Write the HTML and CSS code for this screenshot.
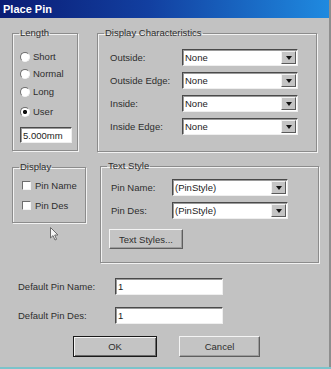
FILE: index.html
```html
<!DOCTYPE html>
<html lang="en">

<head>
    <meta charset="UTF-8">
    <meta name="viewport" content="width=device-width, initial-scale=1.0">
    <title>Place Pin</title>
    <link rel="stylesheet" href="styles.css">
</head>

<body>
    <div class="dialog">
        <div class="titlebar">Place Pin</div>

        <div class="content">
            <div class="row row-top">
                <fieldset class="group group-length">
                    <legend>Length</legend>
                    <div class="option"><span class="radio"></span>Short</div>
                    <div class="option"><span class="radio"></span>Normal</div>
                    <div class="option option-long"><span class="radio"></span>Long</div>
                    <div class="option option-user"><span class="radio checked"></span>User</div>
                    <div class="textbox textbox-length">5.000mm</div>
                </fieldset>

                <fieldset class="group group-chars">
                    <legend>Display Characteristics</legend>
                    <div class="combo-row">
                        <span class="label label-chars">Outside:</span>
                        <div class="combo"><span class="combo-text">None</span><span class="combo-btn"></span></div>
                    </div>
                    <div class="combo-row">
                        <span class="label label-chars">Outside Edge:</span>
                        <div class="combo"><span class="combo-text">None</span><span class="combo-btn"></span></div>
                    </div>
                    <div class="combo-row">
                        <span class="label label-chars">Inside:</span>
                        <div class="combo"><span class="combo-text">None</span><span class="combo-btn"></span></div>
                    </div>
                    <div class="combo-row">
                        <span class="label label-chars">Inside Edge:</span>
                        <div class="combo"><span class="combo-text">None</span><span class="combo-btn"></span></div>
                    </div>
                </fieldset>
            </div>

            <div class="row row-mid">
                <div class="left-col">
                    <fieldset class="group group-display">
                        <legend>Display</legend>
                        <div class="option"><span class="check"></span>Pin Name</div>
                        <div class="option option-des"><span class="check"></span>Pin Des</div>
                    </fieldset>
                    <svg class="cursor" width="9" height="14" viewBox="0 0 9 14">
                        <path d="M0.5 0.5 L0.5 11 L3 8.6 L5 13 L6.6 12.3 L4.7 8 L8 8 Z" fill="#f4f4f4" stroke="#6a6a6a" stroke-width="1" />
                    </svg>
                </div>

                <fieldset class="group group-text">
                    <legend>Text Style</legend>
                    <div class="combo-row">
                        <span class="label label-text">Pin Name:</span>
                        <div class="combo"><span class="combo-text">(PinStyle)</span><span class="combo-btn"></span></div>
                    </div>
                    <div class="combo-row">
                        <span class="label label-text">Pin Des:</span>
                        <div class="combo"><span class="combo-text">(PinStyle)</span><span class="combo-btn"></span></div>
                    </div>
                    <button class="btn btn-styles">Text Styles...</button>
                </fieldset>
            </div>

            <div class="fields">
                <div class="field-row">
                    <span class="label label-field">Default Pin Name:</span>
                    <div class="textbox textbox-field">1</div>
                </div>
                <div class="field-row">
                    <span class="label label-field">Default Pin Des:</span>
                    <div class="textbox textbox-field">1</div>
                </div>
            </div>

            <div class="actions">
                <button class="btn btn-ok">OK</button>
                <button class="btn btn-cancel">Cancel</button>
            </div>
        </div>
    </div>
</body>

</html>
```

FILE: styles.css
```css
* {
    margin: 0;
    padding: 0;
    box-sizing: border-box;
}

html,
body {
    background-color: #7cc3ca;
}

body {
    width: 331px;
    height: 369px;
    overflow: hidden;
}

.dialog {
    width: 331px;
    height: 367px;
    background-color: #c2c2c2;
    border-right: 2px solid #8e8e8e;
    font-family: "Liberation Sans", Arial, sans-serif;
    font-size: 9.5px;
    color: #2e2e2e;
}

.titlebar {
    height: 18px;
    line-height: 18px;
    padding-left: 3px;
    background: linear-gradient(90deg, #0a1c74 0%, #123fa0 45%, #1f8ae0 100%);
    color: #fff;
    font-size: 11px;
    font-weight: bold;
}

.content {
    padding: 9px 0 0 12px;
}

.row {
    display: flex;
    align-items: flex-start;
}

.row-mid {
    margin-top: 8px;
}

/* group boxes */
.group {
    margin: 0;
    min-width: 0;
    border: 1px solid #8c8c8c;
    box-shadow: inset 1px 1px 0 #f2f2f2, 1px 1px 0 #f2f2f2;
}

.group legend {
    padding: 0 1px;
    line-height: 12px;
}

.group-length {
    width: 66px;
    height: 124px;
    padding: 9px 0 0 7px;
}

.group-length legend {
    margin-left: -1px;
}

.group-chars {
    width: 220px;
    height: 125px;
    margin-left: 19px;
    padding: 10px 0 0 12px;
}

.group-chars legend {
    margin-left: -6px;
}

.left-col {
    display: flex;
    flex-direction: column;
}

.group-display {
    width: 74px;
    height: 62px;
    margin-top: 1px;
    padding: 4px 0 0 8px;
}

.group-display legend {
    margin-left: -2px;
}

.cursor {
    margin: 4px 0 0 38px;
}

.group-text {
    width: 219px;
    height: 103px;
    margin-left: 14px;
    padding: 7px 0 0 10px;
}

.group-text legend {
    margin-left: -4px;
}

/* radios and checks */
.option {
    display: flex;
    align-items: center;
    height: 17px;
}

.option-long {
    margin-top: 1px;
}

.option-user {
    margin-top: 3px;
}

.option-des {
    margin-top: 3px;
}

.radio,
.check {
    width: 10px;
    height: 10px;
    margin-right: 3px;
    background-color: #fff;
    border: 1px solid;
    border-color: #6e6e6e #f4f4f4 #f4f4f4 #6e6e6e;
}

.radio {
    border-radius: 50%;
}

.radio.checked {
    background: radial-gradient(circle, #111 0 1.8px, #fff 2.4px);
}

.check {
    margin-left: 1px;
    margin-right: 4px;
    width: 9px;
    height: 9px;
}

/* text boxes */
.textbox {
    background-color: #fff;
    border: 1px solid;
    border-color: #4a4a4a #efefef #efefef #4a4a4a;
    box-shadow: inset 1px 1px 0 #9a9a9a;
    padding-left: 2px;
    display: flex;
    align-items: center;
    color: #1c1c1c;
}

.textbox-length {
    width: 52px;
    height: 16px;
    margin-top: 7px;
}

/* combos */
.combo-row {
    display: flex;
    align-items: center;
    height: 17px;
    margin-bottom: 6px;
}

.label {
    flex-shrink: 0;
}

.label-chars {
    width: 72px;
}

.label-text {
    width: 61px;
}

.combo {
    width: 116px;
    height: 17px;
    display: flex;
    align-items: center;
    justify-content: space-between;
    background-color: #fff;
    border: 1px solid;
    border-color: #4a4a4a #efefef #efefef #4a4a4a;
    box-shadow: inset 1px 1px 0 #9a9a9a;
    padding: 1px 1px 1px 2px;
}

.combo-text {
    color: #1c1c1c;
}

.combo-btn {
    width: 15px;
    height: 13px;
    background-color: #c4c4c4;
    border: 1px solid;
    border-color: #f2f2f2 #5a5a5a #5a5a5a #f2f2f2;
    display: flex;
    justify-content: center;
    align-items: center;
}

.combo-btn::after {
    content: '';
    border-left: 3.5px solid transparent;
    border-right: 3.5px solid transparent;
    border-top: 4px solid #111;
    margin-top: 1px;
}

/* buttons */
.btn {
    font-family: "Liberation Sans", Arial, sans-serif;
    font-size: 9.5px;
    color: #2e2e2e;
    background-color: #c4c4c4;
    border: 1px solid;
    border-color: #f4f4f4 #5e5e5e #5e5e5e #f4f4f4;
    box-shadow: inset -1px -1px 0 #9c9c9c;
    cursor: pointer;
}

.btn-styles {
    width: 74px;
    height: 20px;
    margin: 4px 0 0 -2px;
}

.fields {
    padding-left: 6px;
    margin-top: 15px;
}

.field-row {
    display: flex;
    align-items: center;
    margin-bottom: 12px;
}

.label-field {
    width: 97px;
}

.textbox-field {
    width: 108px;
    height: 17px;
}

.actions {
    display: flex;
    gap: 22px;
    margin: 2px 0 0 61px;
}

.btn-ok {
    width: 84px;
    height: 21px;
    border: 1px solid #1a1a1a;
    box-shadow: inset 1px 1px 0 #f4f4f4, inset -1px -1px 0 #6a6a6a;
}

.btn-cancel {
    width: 81px;
    height: 21px;
}
```
